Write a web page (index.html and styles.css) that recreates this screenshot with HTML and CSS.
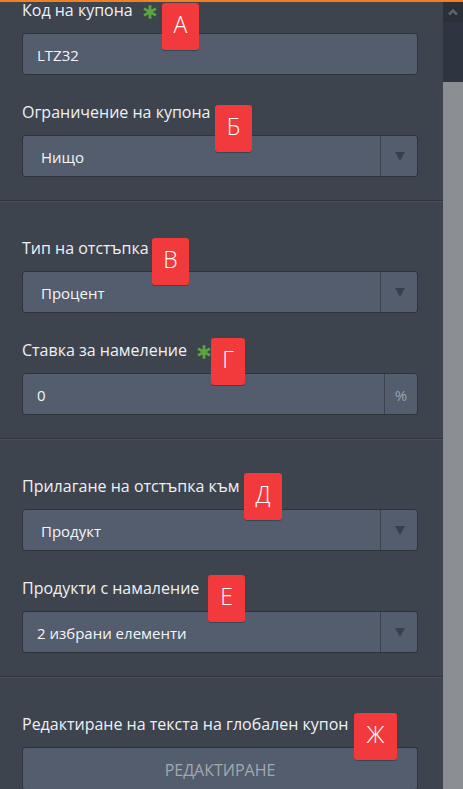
FILE: index.html
```html
<!DOCTYPE html>
<html lang="bg">
<head>
<meta charset="utf-8">
<title>Купон</title>
<link rel="stylesheet" href="styles.css">
</head>
<body>
<div class="topbar"></div>
<div class="layout">
  <main class="panel">
    <section class="group first">
      <div class="field">
        <div class="label">Код на купона <svg class="req" viewBox="0 0 14 14"><path d="M7 1v12M1.8 4l10.4 6M12.2 4L1.8 10"/></svg></div>
        <div class="control"><span class="value input-value">LTZ32</span></div>
        <span class="badge b-a">А</span>
      </div>
      <div class="field">
        <div class="label">Ограничение на купона</div>
        <div class="control select"><span class="value">Нищо</span><span class="arrow"><i></i></span></div>
        <span class="badge b-b">Б</span>
      </div>
    </section>
    <section class="group">
      <div class="field">
        <div class="label">Тип на отстъпка</div>
        <div class="control select"><span class="value">Процент</span><span class="arrow"><i></i></span></div>
        <span class="badge b-v">В</span>
      </div>
      <div class="field">
        <div class="label">Ставка за намеление <svg class="req" viewBox="0 0 14 14"><path d="M7 1v12M1.8 4l10.4 6M12.2 4L1.8 10"/></svg></div>
        <div class="control addon"><span class="value input-value">0</span><span class="unit">%</span></div>
        <span class="badge b-g">Г</span>
      </div>
    </section>
    <section class="group">
      <div class="field">
        <div class="label">Прилагане на отстъпка към</div>
        <div class="control select"><span class="value">Продукт</span><span class="arrow"><i></i></span></div>
        <span class="badge b-d">Д</span>
      </div>
      <div class="field">
        <div class="label">Продукти с намаление</div>
        <div class="control select"><span class="value input-value">2 избрани елементи</span><span class="arrow"><i></i></span></div>
        <span class="badge b-e">Е</span>
      </div>
    </section>
    <section class="group last">
      <div class="field">
        <div class="label">Редактиране на текста на глобален купон</div>
        <div class="control button">РЕДАКТИРАНЕ</div>
        <span class="badge b-zh">Ж</span>
      </div>
    </section>
  </main>
  <div class="scrollbar">
    <div class="sb-up"><svg viewBox="0 0 10 8"><path d="M1 6.5L5 2.5L9 6.5"/></svg></div>
    <div class="sb-track"></div>
    <div class="sb-thumb"></div>
  </div>
</div>
</body>
</html>
```

FILE: styles.css
```css
* { box-sizing: border-box; }
html, body {
  margin: 0;
  padding: 0;
  width: 463px;
  height: 789px;
  overflow: hidden;
  background: #3e444e;
  font-family: "Open Sans", "Liberation Sans", sans-serif;
  color: #eef1f4;
}
.topbar {
  position: absolute;
  left: 0;
  top: 0;
  width: 463px;
  height: 2px;
  background: #f2801f;
  z-index: 5;
}
.layout {
  display: flex;
  height: 789px;
}
.panel {
  width: 443px;
  flex: none;
}
.group {
  padding: 36px 25px 23px 22px;
  border-top: 1px solid #49505a;
  border-bottom: 1px solid #30353d;
  display: flex;
  flex-direction: column;
  gap: 27px;
}
.group.first {
  padding-top: 0;
  border-top: none;
}
.group.last {
  border-bottom: none;
}
.field {
  position: relative;
}
.label {
  font-size: 16px;
  line-height: 20px;
  height: 20px;
  margin-bottom: 13px;
  display: flex;
  align-items: center;
  white-space: nowrap;
}
.req {
  width: 16px;
  height: 16px;
  margin-left: 9px;
  margin-top: 4px;
  fill: none;
  stroke: #5aa83b;
  stroke-width: 2.4;
}
.control {
  height: 42px;
  background: #535d6e;
  border: 1px solid #2f343c;
  border-radius: 3px;
  display: flex;
  align-items: stretch;
  font-size: 15px;
}
.value {
  flex: 1;
  display: flex;
  align-items: center;
  padding-left: 18px;
  padding-top: 2px;
  color: #f3f5f7;
}
.value.input-value {
  padding-left: 14px;
}
.arrow {
  width: 37px;
  border-left: 1px solid #3c424c;
  display: flex;
  align-items: center;
  justify-content: center;
  padding-left: 2px;
}
.arrow i {
  width: 0;
  height: 0;
  border-left: 5px solid transparent;
  border-right: 5px solid transparent;
  border-top: 9px solid #3a404a;
}
.unit {
  width: 33px;
  border-left: 1px solid #3c424c;
  display: flex;
  align-items: center;
  justify-content: center;
  color: #9aa3b0;
  padding-top: 2px;
  font-size: 15px;
}
.button {
  justify-content: center;
  align-items: center;
  color: #a2a8b0;
  font-size: 16px;
  padding-top: 2px;
  border-bottom: none;
}
.badge {
  position: absolute;
  height: 47px;
  padding: 0 0 4px;
  background: #f23a3c;
  border-radius: 3px;
  box-shadow: 0 1px 0 rgba(0,0,0,0.25);
  color: #fff;
  font-size: 23px;
  font-weight: 300;
  line-height: 43px;
  text-align: center;
  z-index: 3;
}
.b-a { left: 140px; top: 3px; width: 37px; }
.b-b { left: 193px; top: 3px; width: 37px; }
.b-v { left: 130px; top: 0px; width: 37px; }
.b-g { left: 189px; top: -2px; width: 34px; }
.b-d { left: 222px; top: -3px; width: 38px; }
.b-e { left: 186px; top: -3px; width: 37px; }
.b-zh { left: 332px; top: -1px; width: 43px; }
.scrollbar {
  width: 20px;
  flex: none;
  background: #2f3540;
  display: flex;
  flex-direction: column;
  padding-top: 2px;
}
.sb-up {
  height: 20px;
  background: #2a2f38;
  display: flex;
  align-items: center;
  justify-content: center;
}
.sb-up svg {
  width: 10px;
  height: 8px;
  fill: none;
  stroke: #5d646e;
  stroke-width: 2.6;
}
.sb-track {
  height: 60px;
}
.sb-thumb {
  flex: 1;
  background: #8a8d92;
}
```
